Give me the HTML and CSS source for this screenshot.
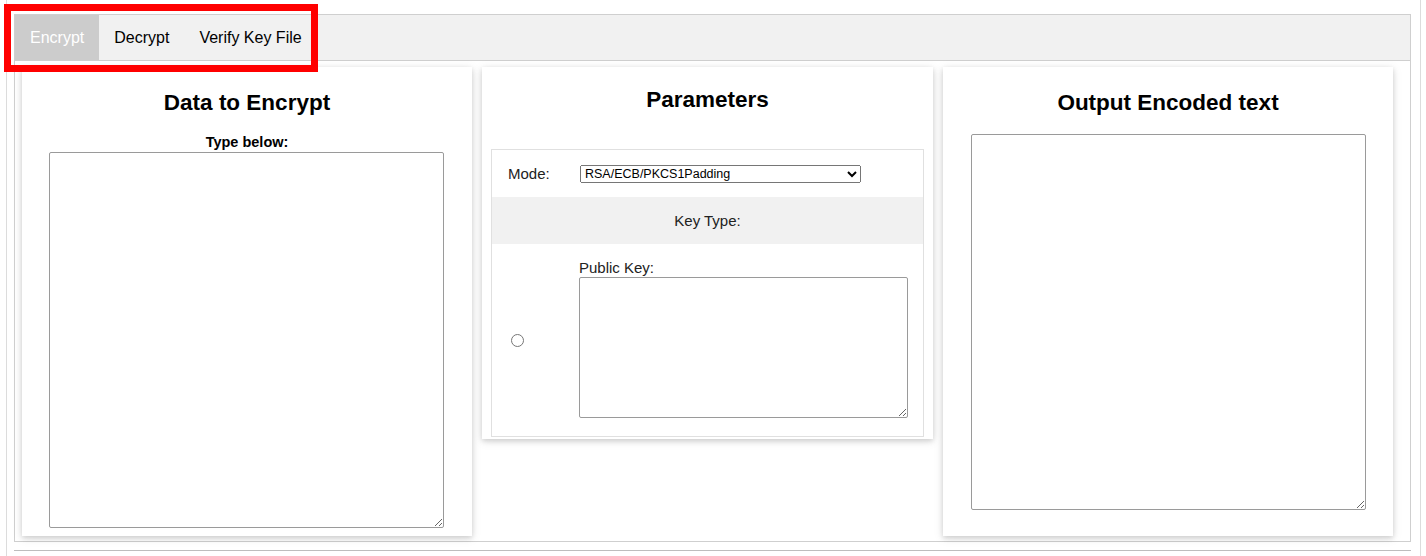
FILE: index.html
```html
<!DOCTYPE html>
<html>
<head>
<meta charset="utf-8">
<title>RSA Encrypt</title>
<link rel="stylesheet" href="styles.css">
</head>
<body>
<div class="page">
  <div class="tabs">
    <button class="tab active">Encrypt</button>
    <button class="tab">Decrypt</button>
    <button class="tab">Verify Key File</button>
  </div>
  <div class="panel">
    <div class="card card-input">
      <h2 class="card-title">Data to Encrypt</h2>
      <label class="field-label">Type below:</label>
      <textarea class="box box-input"></textarea>
    </div>
    <div class="card card-params">
      <h2 class="card-title">Parameters</h2>
      <div class="params">
        <div class="prow prow-mode">
          <span class="mode-label">Mode:</span>
          <select class="mode-select">
            <option>RSA/ECB/PKCS1Padding</option>
            <option>RSA/ECB/OAEPWithSHA-1AndMGF1Padding</option>
          </select>
        </div>
        <div class="prow prow-key">Key Type:</div>
        <div class="prow prow-pub">
          <div class="radio-col"><input type="radio" class="radio" name="kt"></div>
          <div class="pub-col">
            <label class="pub-label">Public Key:</label>
            <textarea class="box box-key"></textarea>
          </div>
        </div>
      </div>
    </div>
    <div class="card card-output">
      <h2 class="card-title">Output Encoded text</h2>
      <textarea class="box box-output"></textarea>
    </div>
  </div>
  <div class="footer-line"></div>
</div>
<div class="highlight"></div>
</body>
</html>
```

FILE: styles.css
```css
* { box-sizing: border-box; }

html, body {
  margin: 0;
  padding: 0;
  background: #fff;
  font-family: "Liberation Sans", Arial, sans-serif;
  color: #000;
}

.page {
  margin: 0 5px 0 6px;
  min-height: 100vh;
  border-left: 1px solid #dcdcdc;
  border-right: 1px solid #dcdcdc;
  padding: 14px 9px 0 7px;
}

.tabs {
  display: flex;
  height: 47px;
  background: #f1f1f1;
  border: 1px solid #cfcfcf;
}

.tab {
  height: 45px;
  padding: 0 15px;
  border: none;
  background: transparent;
  font-family: "Liberation Sans", Arial, sans-serif;
  font-size: 16px;
  color: #000;
  cursor: pointer;
}

.tab.active {
  background: #cccccc;
  color: #fff;
}

.panel {
  border: 1px solid #cfcfcf;
  border-top: none;
  padding: 6px 0 5px 7px;
  display: grid;
  grid-template-columns: 450px 451px 450px;
  column-gap: 10px;
  align-items: start;
}

.card {
  background: #fff;
  box-shadow: 0 2px 5px 0 rgba(0,0,0,0.14), 0 2px 10px 0 rgba(0,0,0,0.10);
  display: flex;
  flex-direction: column;
  align-items: center;
}

.card-title {
  margin: 0;
  font-size: 22.5px;
  line-height: 26px;
  font-weight: bold;
  text-align: center;
}

.card-input { padding: 23px 0 8px; }
.card-output { padding: 23px 0 26px; }
.card-params { padding: 20px 9px 2px; align-items: stretch; }

.field-label {
  display: block;
  margin-top: 17px;
  font-size: 14.5px;
  line-height: 19px;
  font-weight: bold;
}

.box {
  display: block;
  border: 1px solid #9a9a9a;
  border-radius: 2px;
  background: #fff;
  font-family: "Liberation Sans", Arial, sans-serif;
  font-size: 13px;
  margin: 0;
}

.box-input { width: 395px; height: 376px; align-self: flex-start; margin-left: 27px; }
.box-output { width: 395px; height: 376px; margin-top: 18px; }

.params {
  margin-top: 36px;
  border: 1px solid #e0e0e0;
  font-size: 15px;
  color: #222;
}

.prow {
  display: flex;
  align-items: center;
  height: 47px;
}

.prow-mode { padding-left: 16px; }

.mode-label {
  width: 72px;
  line-height: 17px;
}

.mode-select {
  width: 281px;
  height: 18px;
  font-family: "Liberation Sans", Arial, sans-serif;
  font-size: 12.5px;
  color: #000;
  margin: 0;
}

.prow-key {
  background: #f1f1f1;
  justify-content: center;
}

.prow-pub {
  height: 192px;
  align-items: stretch;
}

.radio-col {
  width: 87px;
  display: flex;
  align-items: center;
  padding-left: 19px;
}

.radio {
  margin: 0;
  width: 13px;
  height: 13px;
}

.pub-col {
  padding-top: 15px;
}

.pub-label {
  display: block;
  line-height: 17px;
}

.box-key { width: 329px; height: 141px; margin-top: 1px; }

.footer-line {
  margin-top: 8px;
  border-top: 1px solid #bdbdbd;
}

.highlight {
  position: absolute;
  left: 4px;
  top: 4px;
  width: 314px;
  height: 68px;
  border: 7px solid #ff0000;
  pointer-events: none;
}
```
